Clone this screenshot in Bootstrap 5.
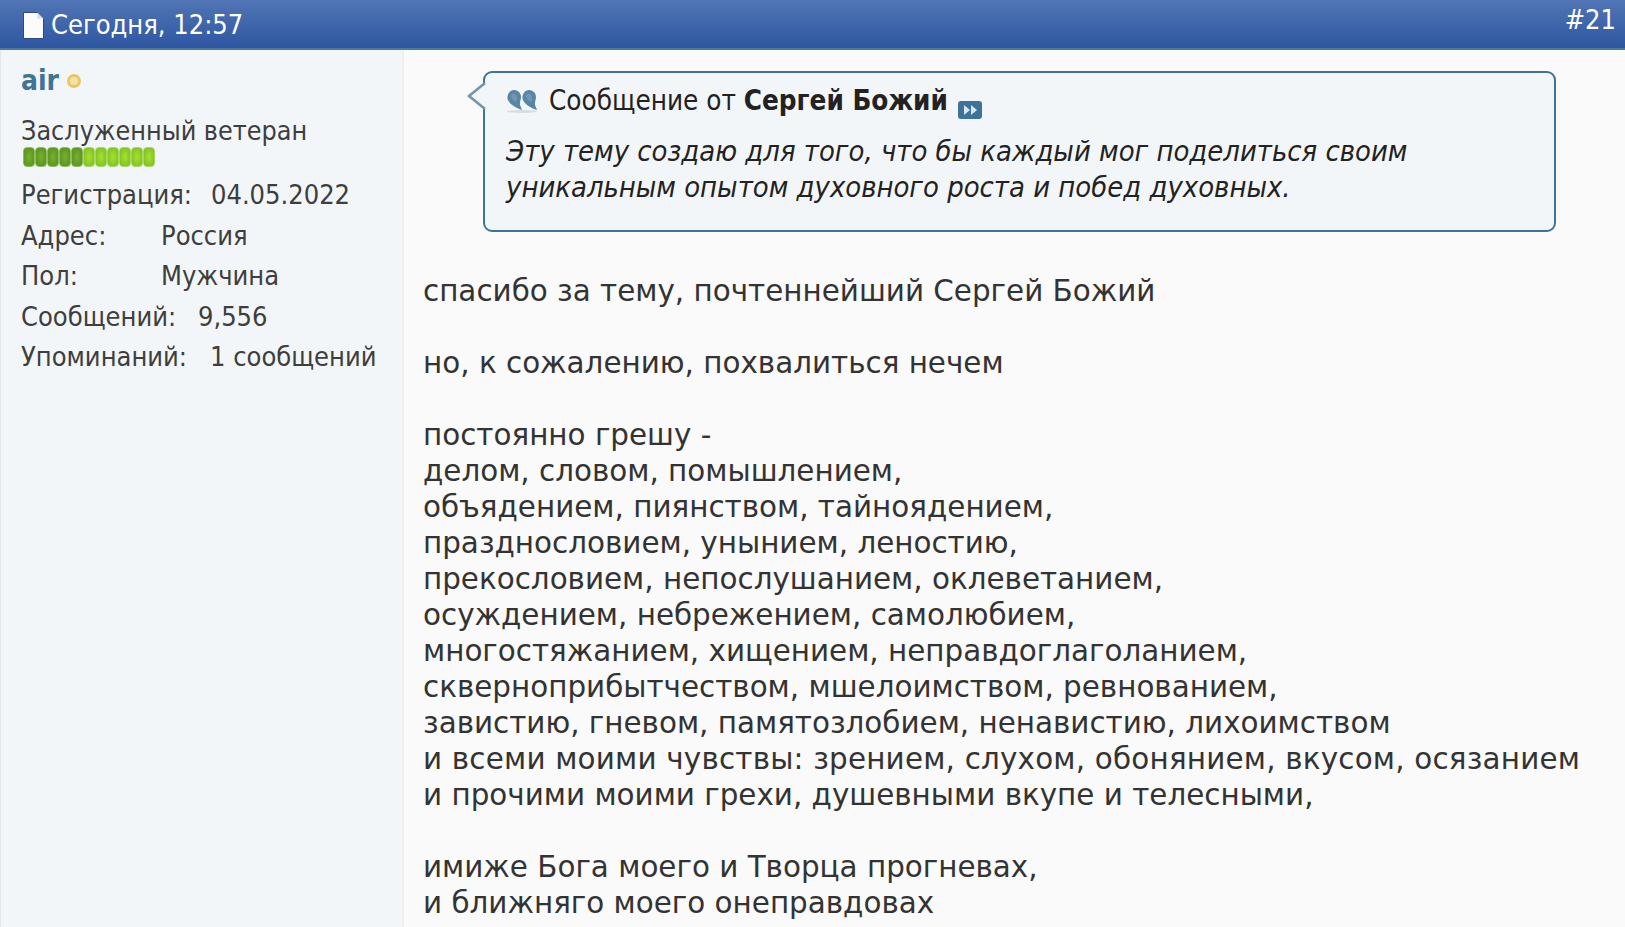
<!DOCTYPE html>
<html lang="ru">
<head>
  <meta charset="UTF-8">
  <title>Сообщение #21</title>
  <link href="https://cdn.jsdelivr.net/npm/bootstrap@5.3.0/dist/css/bootstrap.min.css" rel="stylesheet">
  <style>
    html, body { height: 100%; }
    body {
      background: #fafafa;
      color: #3e3e3e;
      font-family: "DejaVu Sans Condensed", "DejaVu Sans", sans-serif;
      overflow: hidden;
    }
    .post-head {
      height: 50px;
      padding: 0 9px 0 23px;
      color: #fff;
      font-size: 27px;
      background: linear-gradient(#5175b5, #2e56a1);
      border-bottom: 2px solid #4a7a9c;
    }
    .head-left { gap: 7px; padding-top: 9px; line-height: 32px; }
    .post-body { height: 877px; }
    .user-side {
      width: 404px;
      flex: none;
      padding: 14px 0 0 20px;
      background: #f2f6f9;
      border-left: 1px solid #e6e9ec;
      border-right: 2px solid #efefef;
      font-size: 27px;
    }
    .user-name { color: #417394; font-weight: 700; font-size: 28px; line-height: 34px; }
    .user-dot {
      width: 14px;
      height: 14px;
      border-radius: 50%;
      background: #f6e3a0;
      border: 3px solid #e8c76a;
    }
    .user-title { margin-top: 16px; line-height: 34px; font-size: 26.7px; }
    .rep-bar { margin: -1px 0 8px 2px; height: 20px; }
    .rep-pip {
      width: 12px;
      height: 20px;
      border-radius: 4px;
      border: 1px solid #8fbb5f;
      background: radial-gradient(ellipse at center, #79b030, #5a951f 80%);
    }
    .rep-pip.lit {
      border-color: #a6d860;
      background: radial-gradient(ellipse at center, #a8e22e, #82c226 80%);
    }
    .user-row { height: 40.5px; line-height: 40.5px; white-space: nowrap; }
    .row-label { display: inline-block; }
    .label-reg { width: 190px; }
    .label-short { width: 140px; }
    .label-posts { width: 177px; }
    .label-ment { width: 189px; }
    .post-main { padding: 21px 0 0 19px; min-width: 0; flex: 1; }
    .quote-box {
      position: relative;
      width: 1073px;
      height: 161px;
      margin-left: 60px;
      padding: 10px 20px 0;
      background: #f2f6f9;
      border: 2px solid #417394;
      border-radius: 9px;
      font-size: 27.6px;
      line-height: 36px;
      color: #222;
    }
    .quote-tail { position: absolute; left: -18px; top: 9px; }
    .quote-head { gap: 12px; padding-left: 2px; }
    .quote-text { font-style: italic; font-size: 28.9px; margin-top: 14px; padding-left: 1px; white-space: nowrap; }
    .skip-icon { margin: 18px 0 0 -2px; }
    .post-text {
      margin-top: 41px;
      font-family: "DejaVu Sans", sans-serif;
      font-size: 29.4px;
      line-height: 36px;
      color: #333;
      white-space: nowrap;
    }
    .wide-line { letter-spacing: .2px; }
  </style>
</head>
<body>

<div class="post-head d-flex align-items-start justify-content-between">
  <div class="head-left d-flex align-items-center">
    <svg width="21" height="27" viewBox="0 0 21 27"><path d="M.5.5h14l6 6v20H.5z" fill="#fbfbfb" stroke="#2a4a80"/><path d="M14.5.5v6h6z" fill="#d4dbe6"/></svg>
    <span>Сегодня, 12:57</span>
  </div>
  <div>#21</div>
</div>

<div class="post-body d-flex">
  <div class="user-side">
    <div class="d-flex align-items-center gap-2">
      <span class="user-name">air</span>
      <span class="user-dot"></span>
    </div>
    <div class="user-title">Заслуженный ветеран</div>
    <div class="rep-bar d-flex">
      <span class="rep-pip"></span><span class="rep-pip"></span><span class="rep-pip"></span><span class="rep-pip"></span><span class="rep-pip"></span><span class="rep-pip lit"></span><span class="rep-pip lit"></span><span class="rep-pip lit"></span><span class="rep-pip lit"></span><span class="rep-pip lit"></span><span class="rep-pip lit"></span>
    </div>
    <div class="user-row"><span class="row-label label-reg">Регистрация:</span>04.05.2022</div>
    <div class="user-row"><span class="row-label label-short">Адрес:</span>Россия</div>
    <div class="user-row"><span class="row-label label-short">Пол:</span>Мужчина</div>
    <div class="user-row"><span class="row-label label-posts">Сообщений:</span>9,556</div>
    <div class="user-row"><span class="row-label label-ment">Упоминаний:</span>1 сообщений</div>
  </div>
  <div class="post-main">
    <div class="quote-box">
      <svg class="quote-tail" width="20" height="30" viewBox="0 0 20 30"><path d="M18 1 2 14l16 13z" fill="#f2f6f9"/><path d="M18 1 2 14l16 13" fill="none" stroke="#6f95ae" stroke-width="2.5"/></svg>
      <div class="quote-head d-flex align-items-center">
        <svg width="30" height="23" viewBox="0 0 30 23"><ellipse cx="15" cy="21.500" rx="15" ry="1.500" fill="#d5dde3"/><path d="M7 0c4 0 7 3 7 7 0 3-1.500 5-1 8l2 5C9 18 2 14 .5 9 0 4 3 0 7 0z" fill="#5a86a5"/><path d="M22 0c4 0 7 3 7 7 0 3-1.500 5-1 8l2 5c-6-2-13-6-14.500-11C15 4 18 0 22 0z" fill="#5a86a5"/><path d="M5 4c2-1 5 0 5 3 0 2 0 3-1 5-2-1-4-3-5-5 0-1 0-2 1-3zM20 4c2-1 5 0 5 3 0 2 0 3-1 5-2-1-4-3-5-5 0-1 0-2 1-3z" fill="#6f97b3"/></svg>
        <span>Сообщение от <b>Сергей Божий</b></span>
        <svg class="skip-icon" width="24" height="18" viewBox="0 0 24 18"><rect width="24" height="18" rx="3" fill="#3f7298"/><path d="M6 4l6 5-6 5zM13 4l6 5-6 5z" fill="#d8e6f0"/></svg>
      </div>
      <div class="quote-text">Эту тему создаю для того, что бы каждый мог поделиться своим<br>уникальным опытом духовного роста и побед духовных.</div>
    </div>
    <div class="post-text">спасибо за тему, почтеннейший Сергей Божий<br><br>но, к сожалению, похвалиться нечем<br><br>постоянно грешу -<br>делом, словом, помышлением,<br>объядением, пиянством, тайноядением,<br>празднословием, унынием, леностию,<br>прекословием, непослушанием, оклеветанием,<br>осуждением, небрежением, самолюбием,<br>многостяжанием, хищением, неправдоглаголанием,<br>скверноприбытчеством, мшелоимством, ревнованием,<br>завистию, гневом, памятозлобием, ненавистию, лихоимством<br><span class="wide-line">и всеми моими чувствы: зрением, слухом, обонянием, вкусом, осязанием</span><br>и прочими моими грехи, душевными вкупе и телесными,<br><br>имиже Бога моего и Творца прогневах,<br>и ближняго моего онеправдовах</div>
  </div>
</div>

</body>
</html>
